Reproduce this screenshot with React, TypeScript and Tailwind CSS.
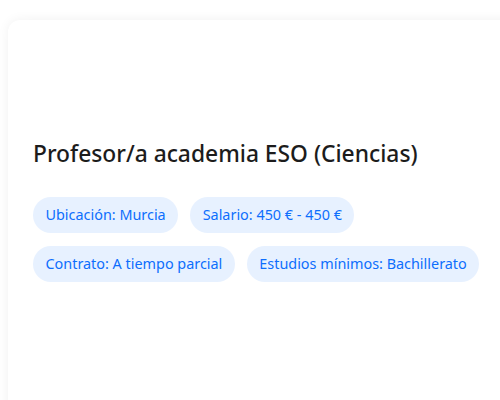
export default function App() {
  const chips = [
    "Ubicación: Murcia",
    "Salario: 450 € - 450 €",
    "Contrato: A tiempo parcial",
    "Estudios mínimos: Bachillerato",
  ];
  return (
    <div className="h-[400px] w-[500px] overflow-hidden bg-white pl-2 pt-5 font-['Noto_Sans',sans-serif]">
      <div className="h-[420px] w-[520px] rounded-xl bg-white px-[25px] pt-[118px] shadow-[0_0_12px_rgba(0,0,0,0.06)]">
        <h2 className="text-[22.8px] font-medium leading-8 text-[#1c1c1c]">
          Profesor/a academia ESO (Ciencias)
        </h2>
        <div className="mt-[27px] flex w-[460px] flex-wrap gap-x-3 gap-y-[13px]">
          {chips.map((c) => (
            <span
              key={c}
              className="flex h-9 items-center rounded-full bg-[#e7f1ff] px-[12.5px] text-[14.4px] text-[#0d6efd]"
            >
              {c}
            </span>
          ))}
        </div>
      </div>
    </div>
  );
}
